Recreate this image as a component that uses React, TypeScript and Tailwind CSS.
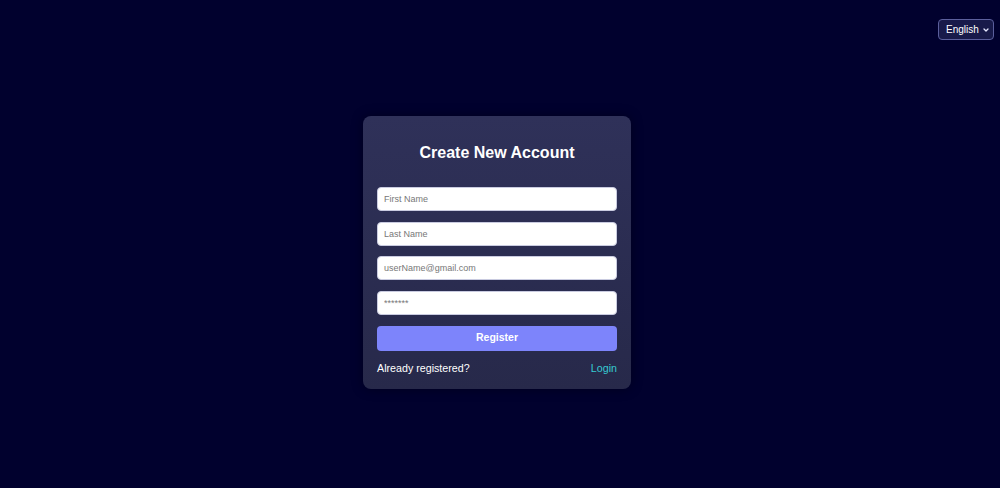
import React from "react";

const FONT = { fontFamily: '"Liberation Sans", Arial, sans-serif' };

function LanguageSelect() {
  return (
    <div className="relative w-[56px] h-[21px]">
      <select
        defaultValue="en"
        className="block appearance-none w-full h-full rounded-[4px] border border-[#5b5f9c] bg-[#181a4a] pl-[7px] pr-[12px] text-[10px] leading-[19px] text-white outline-none"
      >
        <option value="en">English</option>
      </select>
      <svg
        className="pointer-events-none absolute right-[5px] top-[8.5px]"
        width="6"
        height="4"
        viewBox="0 0 6 4"
        fill="none"
      >
        <path d="M1 1l2 2 2-2" stroke="#e5e7ff" strokeWidth="1.3" strokeLinecap="round" strokeLinejoin="round" />
      </svg>
    </div>
  );
}

const FIELDS = [
  { placeholder: "First Name", type: "text" },
  { placeholder: "Last Name", type: "text" },
  { placeholder: "userName@gmail.com", type: "email" },
  { placeholder: "*******", type: "text" },
];

export default function App() {
  return (
    <div className="min-h-screen w-full bg-[#01012e] flex flex-col" style={FONT}>
      <header className="flex justify-end pt-[19px] pr-[6px]">
        <LanguageSelect />
      </header>

      <main className="flex justify-center pt-[76px] pr-[6px]">
        <div className="w-[268px] rounded-[8px] bg-gradient-to-b from-[#2f3159] to-[#27294a] px-[14px] pt-[26px] pb-[14px] shadow-[0_0_12px_rgba(0,0,0,0.35)]">
          <h2 className="text-center text-[16px] leading-[22px] font-bold text-white">Create New Account</h2>

          <form className="mt-[23px] flex flex-col gap-[10.7px]" onSubmit={(e) => e.preventDefault()}>
            {FIELDS.map((f) => (
              <input
                key={f.placeholder}
                type={f.type}
                placeholder={f.placeholder}
                className="h-[24px] w-full rounded-[4px] border border-[#c9cbe0] bg-white px-[6px] text-[9px] text-gray-800 placeholder:text-[#777777] outline-none"
              />
            ))}
            <button
              type="submit"
              className="h-[25px] w-full rounded-[4px] bg-[#7d84fb] text-[10.5px] font-bold text-white"
            >
              Register
            </button>
          </form>

          <div className="mt-[10px] flex items-center justify-between text-[10.7px] leading-[14px]">
            <span className="text-white">Already registered?</span>
            <a href="#" className="text-[#36c9d2]">Login</a>
          </div>
        </div>
      </main>
    </div>
  );
}
